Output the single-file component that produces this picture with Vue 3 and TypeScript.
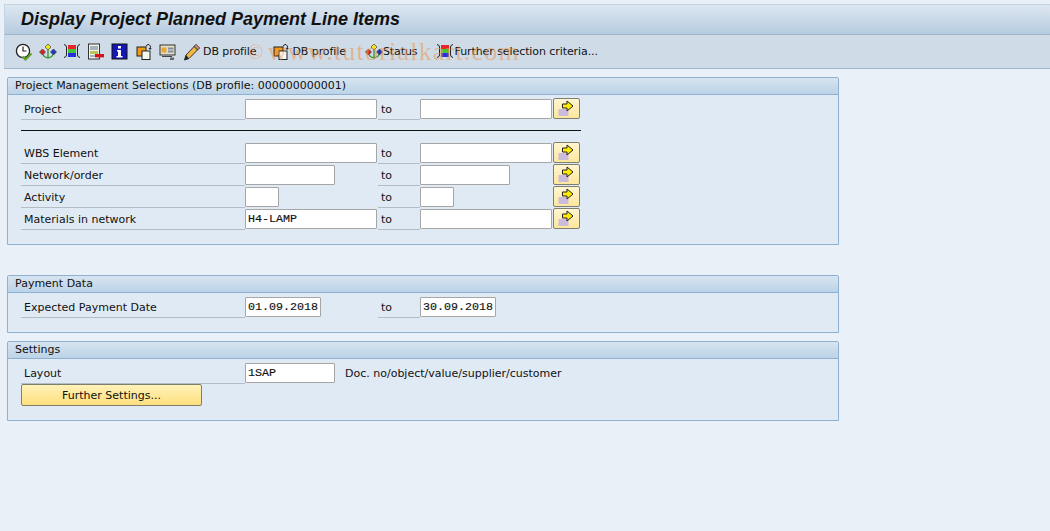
<script setup lang="ts">
interface Tool { icon: string; label?: string; cls: string }
interface Row { label: string; low: string; lowVal?: string; high: string; highVal?: string; more: boolean }

const tools: Tool[] = [
  { icon: 'clock', cls: 't1' },
  { icon: 'tree', cls: 't' },
  { icon: 'cols', cls: 't' },
  { icon: 'form', cls: 't' },
  { icon: 'info', cls: 't' },
  { icon: 'copy', cls: 't2' },
  { icon: 'screen', cls: 't3' },
  { icon: 'pencil', label: 'DB profile', cls: 't4' },
  { icon: 'copy', label: 'DB profile', cls: 't5' },
  { icon: 'tree', label: 'Status', cls: 't6' },
  { icon: 'cols', label: 'Further selection criteria...', cls: 't7' }
]

const rows: Row[] = [
  { label: 'WBS Element', low: 'w132', high: 'w132', more: true },
  { label: 'Network/order', low: 'w90', high: 'w90', more: true },
  { label: 'Activity', low: 'w34', high: 'w34', more: true },
  { label: 'Materials in network', low: 'w132', lowVal: 'H4-LAMP', high: 'w132', more: true }
]
</script>

<template>
  <div class="page">
    <svg class="defs" width="0" height="0" aria-hidden="true">
      <symbol id="clock" viewBox="0 0 18 18">
        <circle cx="8" cy="8" r="6.6" fill="#fff" stroke="#222" stroke-width="1.3" />
        <path d="M8 3.5V8H11.5" fill="none" stroke="#222" stroke-width="1.2" />
        <path d="M7.5 13.5 10.5 16.5 16.5 10.5" fill="none" stroke="#5fa52a" stroke-width="2.2" />
      </symbol>
      <symbol id="tree" viewBox="0 0 18 18">
        <path d="M9 6V15M3.5 10Q4 14 9 15Q14 14 14.5 10" fill="none" stroke="#3f9a3a" stroke-width="1.4" />
        <path d="M9 1 12 4 9 7 6 4Z" fill="#f7e51c" stroke="#444" stroke-width=".7" />
        <path d="M3.5 6 6.5 9 3.5 12 .5 9Z" fill="#d8241f" stroke="#444" stroke-width=".7" />
        <path d="M14.5 6 17.5 9 14.5 12 11.5 9Z" fill="#1e34c4" stroke="#444" stroke-width=".7" />
      </symbol>
      <symbol id="cols" viewBox="0 0 18 18">
        <rect x="5" y="2" width="8" height="4" fill="#e8262a" />
        <rect x="5" y="6" width="8" height="4" fill="#44c23c" />
        <rect x="5" y="10" width="8" height="4" fill="#2431d8" />
        <path d="M1 1.5Q3.5 2 3.5 4V12Q3.5 14 1 14.5M17 1.5Q14.5 2 14.5 4V12Q14.5 14 17 14.5" fill="none" stroke="#222" stroke-width="1" />
      </symbol>
      <symbol id="form" viewBox="0 0 18 18">
        <rect x="1.5" y="1" width="11" height="15" fill="#f4f4ee" stroke="#333" />
        <path d="M3 4H11M3 6H11" stroke="#58708a" />
        <rect x="3" y="8" width="8" height="3" fill="#b7c85a" />
        <path d="M3 13H8" stroke="#58708a" />
        <rect x="8" y="11" width="9" height="3.4" fill="#d4141a" />
      </symbol>
      <symbol id="info" viewBox="0 0 18 18">
        <rect x="1" y="1" width="15" height="15" fill="#1317b8" stroke="#111" />
        <path d="M7 3H10V5.5H7ZM6 7H10V13H11.5V14.5H5.5V13H7V8.5H6Z" fill="#fff" />
      </symbol>
      <symbol id="copy" viewBox="0 0 18 18">
        <rect x="1" y="4" width="9" height="9" fill="#f09a18" stroke="#222" />
        <rect x="6" y="8" width="8" height="8.5" fill="#f6f6f0" stroke="#222" />
        <path d="M10 3.5Q11 1 13 1.5Q15.5 2.5 14 6" fill="none" stroke="#222" />
        <path d="M12.5 5 14 7 15.8 5.2Z" fill="#222" />
      </symbol>
      <symbol id="screen" viewBox="0 0 18 18">
        <rect x="1" y="2" width="15" height="10" fill="#e2dcc4" stroke="#333" />
        <rect x="2.5" y="4.5" width="5" height="5" fill="#e8a53c" />
        <rect x="9" y="4.5" width="5.5" height="2" fill="#7c8fa5" />
        <rect x="9" y="7.5" width="5.5" height="2" fill="#7c8fa5" />
        <path d="M3 13.5H13" stroke="#444" />
        <rect x="11" y="14.5" width="4" height="2.5" fill="#666" />
      </symbol>
      <symbol id="pencil" viewBox="0 0 18 18">
        <path d="M13 1.5 16.5 5 6 15.5 1.5 17 3 12Z" fill="#f2b742" stroke="#333" />
        <path d="M11 3.5 14.5 7" stroke="#333" />
        <path d="M1.5 17 3 12 6 15.5Z" fill="#222" />
        <path d="M13 1.5 16.5 5 15 6.5 11.5 3Z" fill="#d99" stroke="#333" stroke-width=".6" />
      </symbol>
      <symbol id="arrow" viewBox="0 0 18 18">
        <rect x="0.5" y="9" width="10" height="7" fill="#cbbcdc" />
        <path d="M4.5 4H9V1L15 6 9 11V8H4.5Z" fill="#ffec00" stroke="#222" />
      </symbol>
    </svg>

    <header class="title">Display Project Planned Payment Line Items</header>

    <nav class="toolbar">
      <span v-for="(t, i) in tools" :key="i" class="tool" :class="t.cls">
        <svg class="ico"><use :href="'#' + t.icon" /></svg>
        <span v-if="t.label" class="tool-text">{{ t.label }}</span>
      </span>
      <span class="mark">www.tutorialkart.com</span>
      <span class="copyr">©</span>
    </nav>

    <main class="content">
      <section class="group g1">
        <h2 class="ghead">Project Management Selections (DB profile: 000000000001)</h2>
        <div class="gbody">
          <div class="row">
            <label class="lbl">Project</label>
            <div class="low"><input class="fld w132" /></div>
            <span class="to">to</span>
            <div class="high"><input class="fld w132" /></div>
            <button class="more" aria-label="Multiple selection"><svg class="arrow"><use href="#arrow" /></svg></button>
          </div>
          <hr class="rule" />
          <div v-for="r in rows" :key="r.label" class="row">
            <label class="lbl">{{ r.label }}</label>
            <div class="low"><input class="fld" :class="r.low" :value="r.lowVal ?? ''" /></div>
            <span class="to">to</span>
            <div class="high"><input class="fld" :class="r.high" /></div>
            <button class="more" aria-label="Multiple selection"><svg class="arrow"><use href="#arrow" /></svg></button>
          </div>
        </div>
      </section>

      <section class="group g2">
        <h2 class="ghead">Payment Data</h2>
        <div class="gbody">
          <div class="row">
            <label class="lbl">Expected Payment Date</label>
            <div class="low"><input class="fld w76" value="01.09.2018" /></div>
            <span class="to">to</span>
            <div class="high"><input class="fld w76" value="30.09.2018" /></div>
          </div>
        </div>
      </section>

      <section class="group g3">
        <h2 class="ghead">Settings</h2>
        <div class="gbody">
          <div class="row">
            <label class="lbl">Layout</label>
            <div class="low">
              <input class="fld w90" value="1SAP" />
              <span class="desc">Doc. no/object/value/supplier/customer</span>
            </div>
          </div>
          <button class="settings">Further Settings...</button>
        </div>
      </section>
    </main>
  </div>
</template>

<style scoped>
.page {
  position: relative;
  width: 1050px;
  height: 531px;
  overflow: hidden;
  background: #e9f0f7;
  font-family: "DejaVu Sans", "Noto Sans", sans-serif;
  font-size: 11px;
  color: #111;
  padding: 4px 0 0 4px;
  box-sizing: border-box;
}
.defs { position: absolute; }
.title {
  height: 31px;
  box-sizing: border-box;
  padding: 3px 0 0 16px;
  font-family: "Liberation Sans", sans-serif;
  font-size: 18px;
  line-height: 22px;
  font-weight: bold;
  font-style: italic;
  background: linear-gradient(#dde7f1, #b6cbe0);
  border-top: 1px solid #c4d3e2;
  border-left: 1px solid #c4d3e2;
  border-bottom: 1px solid #9fb4c9;
}
.toolbar {
  position: relative;
  display: flex;
  align-items: center;
  height: 34px;
  box-sizing: border-box;
  padding-left: 10px;
  padding-top: 1px;
  background: #cfdce8;
  border-left: 1px solid #c4d3e2;
  border-bottom: 1px solid #a3b6c9;
}
.tool { display: flex; align-items: center; }
.ico { width: 18px; height: 18px; display: block; }
.tool-text { line-height: 18px; letter-spacing: -0.08px; }
.t { margin-left: 6px; }
.t1 { margin-left: 0; }
.t2 { margin-left: 7px; }
.t3 { margin-left: 5px; }
.t4 { margin-left: 6px; }
.t5 { margin-left: 17px; }
.t6 { margin-left: 19px; }
.t7 { margin-left: 18px; }
.t4 .tool-text { margin-left: 2px; }
.t5 .tool-text { margin-left: 1px; }
.t6 .tool-text { margin-left: 0; }
.t7 .tool-text { margin-left: 1px; }
.mark {
  position: absolute;
  left: 263px;
  top: 2px;
  font-family: "Liberation Serif", serif;
  font-size: 26px;
  letter-spacing: 1.2px;
  line-height: 30px;
  color: rgba(232, 150, 80, 0.55);
  pointer-events: none;
  white-space: nowrap;
}
.copyr {
  position: absolute;
  left: 243px;
  top: 5px;
  font-family: "Liberation Serif", serif;
  font-size: 20px;
  line-height: 24px;
  color: rgba(232, 150, 80, 0.55);
}
.content {
  padding: 8px 0 0 3px;
}
.group {
  width: 832px;
  box-sizing: border-box;
  background: #dfeaf4;
  border: 1px solid #8fb0d0;
  border-top-left-radius: 2px;
  border-top-right-radius: 2px;
}
.g1 { height: 168px; }
.g2 { height: 58px; margin-top: 30px; }
.g3 { height: 80px; margin-top: 8px; }
.ghead {
  margin: 0;
  height: 17px;
  box-sizing: border-box;
  padding-left: 7px;
  font-size: 11px;
  line-height: 15px;
  font-weight: normal;
  background: linear-gradient(#d7e4f0, #bcd3e8);
  border-bottom: 1px solid #8fb0d0;
}
.gbody { padding: 4px 0 0 13px; }
.row {
  display: grid;
  grid-template-columns: 224px 133px 42px 133px 28px;
  height: 22px;
  align-items: start;
}
.lbl, .to {
  height: 21px;
  line-height: 21px;
  box-sizing: border-box;
  padding-left: 3px;
  border-bottom: 1px solid #b4bcc4;
  white-space: nowrap;
}
.to { padding-left: 3px; }
.low, .high { display: flex; }
.low { grid-column: 2; }
.fld {
  height: 20px;
  box-sizing: border-box;
  padding: 0 0 0 2px;
  border: 1px solid #a6a6a6;
  border-radius: 1px;
  background: #fff;
  font-family: "Liberation Mono", monospace;
  font-size: 11.7px;
  color: #111;
  -webkit-text-stroke: 0.15px #111;
  outline: none;
}
.w132 { width: 132px; }
.w90 { width: 90px; }
.w76 { width: 76px; }
.w34 { width: 34px; }
.more {
  width: 27px;
  height: 21px;
  margin: -1px 0 0 0;
  padding: 0;
  display: flex;
  align-items: center;
  justify-content: center;
  border: 1px solid #7f7f70;
  border-radius: 2px;
  background: linear-gradient(#fff6d2, #fde79c);
}
.arrow { width: 18px; height: 18px; display: block; }
.desc { flex: none; line-height: 21px; white-space: nowrap; margin-left: 10px; }
.rule {
  width: 560px;
  height: 1px;
  margin: 9px 0 12px;
  border: 0;
  background: #111;
}
.settings {
  display: block;
  width: 181px;
  height: 22px;
  margin-top: -1px;
  padding: 0;
  border: 1px solid #7f7f70;
  border-radius: 2px;
  background: linear-gradient(#fff2b8, #fddf7e);
  font: inherit;
  color: #111;
}
</style>

<style>
html, body { margin: 0; background: #e9f0f7; }
</style>
